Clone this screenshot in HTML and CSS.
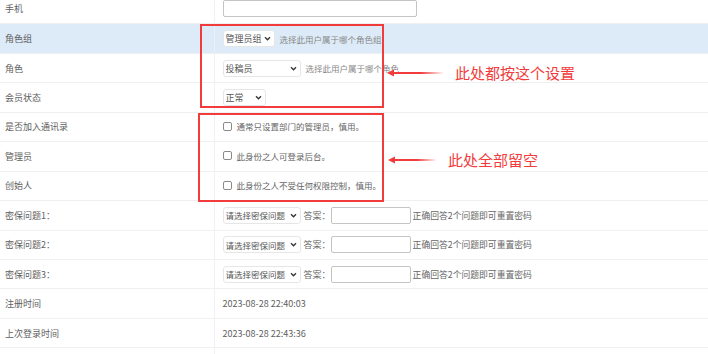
FILE: index.html
```html
<!DOCTYPE html>
<html lang="zh-CN">
<head>
    <meta charset="UTF-8">
    <meta name="viewport" content="width=device-width, initial-scale=1.0">
    <title>会员编辑</title>
    <link rel="stylesheet" href="styles.css">
</head>
<body>
    <div class="page">
        <table class="form-table">
            <tr>
                <td class="label">手机</td>
                <td class="field"><input type="text" class="text-input wide"></td>
            </tr>
            <tr class="hover">
                <td class="label">角色组</td>
                <td class="field">
                    <span class="select-wrap"><select class="select sel-group"><option>管理员组</option></select><svg class="chev" viewBox="0 0 8 6"><path d="M1 1.5 L4 4.5 L7 1.5"/></svg></span>
                    <span class="hint">选择此用户属于哪个角色组</span>
                </td>
            </tr>
            <tr>
                <td class="label">角色</td>
                <td class="field">
                    <span class="select-wrap"><select class="select sel-role"><option>投稿员</option></select><svg class="chev" viewBox="0 0 8 6"><path d="M1 1.5 L4 4.5 L7 1.5"/></svg></span>
                    <span class="hint">选择此用户属于哪个角色</span>
                </td>
            </tr>
            <tr>
                <td class="label">会员状态</td>
                <td class="field">
                    <span class="select-wrap"><select class="select sel-status"><option>正常</option></select><svg class="chev" viewBox="0 0 8 6"><path d="M1 1.5 L4 4.5 L7 1.5"/></svg></span>
                </td>
            </tr>
            <tr>
                <td class="label">是否加入通讯录</td>
                <td class="field"><label class="check"><span class="box"></span>通常只设置部门的管理员，慎用。</label></td>
            </tr>
            <tr>
                <td class="label">管理员</td>
                <td class="field"><label class="check"><span class="box"></span>此身份之人可登录后台。</label></td>
            </tr>
            <tr>
                <td class="label">创始人</td>
                <td class="field"><label class="check"><span class="box"></span>此身份之人不受任何权限控制，慎用。</label></td>
            </tr>
            <tr>
                <td class="label">密保问题1：</td>
                <td class="field">
                    <span class="select-wrap"><select class="select sel-question"><option>请选择密保问题</option></select><svg class="chev" viewBox="0 0 8 6"><path d="M1 1.5 L4 4.5 L7 1.5"/></svg></span>
                    <span class="answer">答案：</span><input type="text" class="text-input short">
                    <span class="note">正确回答2个问题即可重置密码</span>
                </td>
            </tr>
            <tr>
                <td class="label">密保问题2：</td>
                <td class="field">
                    <span class="select-wrap"><select class="select sel-question"><option>请选择密保问题</option></select><svg class="chev" viewBox="0 0 8 6"><path d="M1 1.5 L4 4.5 L7 1.5"/></svg></span>
                    <span class="answer">答案：</span><input type="text" class="text-input short">
                    <span class="note">正确回答2个问题即可重置密码</span>
                </td>
            </tr>
            <tr>
                <td class="label">密保问题3：</td>
                <td class="field">
                    <span class="select-wrap"><select class="select sel-question"><option>请选择密保问题</option></select><svg class="chev" viewBox="0 0 8 6"><path d="M1 1.5 L4 4.5 L7 1.5"/></svg></span>
                    <span class="answer">答案：</span><input type="text" class="text-input short">
                    <span class="note">正确回答2个问题即可重置密码</span>
                </td>
            </tr>
            <tr>
                <td class="label">注册时间</td>
                <td class="field">2023-08-28 22:40:03</td>
            </tr>
            <tr>
                <td class="label">上次登录时间</td>
                <td class="field">2023-08-28 22:43:36</td>
            </tr>
            <tr>
                <td class="label"></td>
                <td class="field"></td>
            </tr>
        </table>

        <!-- annotations drawn over the screenshot -->
        <div class="mark mark-set"></div>
        <div class="mark mark-empty"></div>
        <div class="note-tip tip-set">
            <svg class="arrow" viewBox="0 0 56 8">
                <defs>
                    <linearGradient id="fade1" gradientUnits="userSpaceOnUse" x1="0" x2="56" y1="0" y2="0">
                        <stop offset="0" stop-color="#f23c3c"/>
                        <stop offset="0.6" stop-color="#f23c3c"/>
                        <stop offset="1" stop-color="#f23c3c" stop-opacity="0.05"/>
                    </linearGradient>
                </defs>
                <path d="M4 4 H56" stroke="url(#fade1)" stroke-width="2"/>
                <path d="M0 4 L7 0.5 L7 7.5 Z" fill="#f23c3c"/>
            </svg>
            <span>此处都按这个设置</span>
        </div>
        <div class="note-tip tip-empty">
            <svg class="arrow" viewBox="0 0 48 8">
                <defs>
                    <linearGradient id="fade2" gradientUnits="userSpaceOnUse" x1="0" x2="48" y1="0" y2="0">
                        <stop offset="0" stop-color="#f23c3c"/>
                        <stop offset="0.6" stop-color="#f23c3c"/>
                        <stop offset="1" stop-color="#f23c3c" stop-opacity="0.05"/>
                    </linearGradient>
                </defs>
                <path d="M4 4 H48" stroke="url(#fade2)" stroke-width="2"/>
                <path d="M0 4 L7 0.5 L7 7.5 Z" fill="#f23c3c"/>
            </svg>
            <span>此处全部留空</span>
        </div>
    </div>
</body>
</html>
```

FILE: styles.css
```css
body {
    margin: 0;
    background-color: #fff;
    font-family: "Noto Sans CJK SC", "Noto Sans", sans-serif;
    font-size: 9px;
    color: #606060;
    overflow: hidden;
}
.page {
    position: relative;
    width: 708px;
    height: 354px;
    overflow: hidden;
}
.form-table {
    width: 100%;
    border-collapse: collapse;
    margin-top: -5.5px;
}
.form-table td {
    height: 29.45px;
    padding: 0;
    border-bottom: 1px solid #eef0f2;
    box-sizing: border-box;
    vertical-align: middle;
    white-space: nowrap;
}
.form-table .label {
    width: 214px;
    padding-left: 5px;
    border-right: 1px solid #eef0f2;
    box-sizing: border-box;
}
.form-table .field {
    padding-left: 8px;
}
.form-table tr.hover td {
    background-color: #dcebf7;
}
.text-input {
    height: 17px;
    border: 1px solid #c4c4c4;
    border-radius: 2px;
    box-sizing: border-box;
    padding: 0 3px;
    vertical-align: middle;
    background: #fff;
}
.text-input.wide {
    width: 194px;
}
.text-input.short {
    width: 80px;
}
.select-wrap {
    position: relative;
    display: inline-block;
    vertical-align: middle;
}
.select {
    appearance: none;
    -webkit-appearance: none;
    height: 17px;
    border: 1px solid #e6e6e6;
    border-radius: 3px;
    background: #fff;
    font-family: inherit;
    font-size: 9px;
    color: #555;
    padding: 0 0 0 2px;
    box-sizing: border-box;
    display: block;
}
.sel-group { width: 52px; }
.sel-role { width: 78px; }
.sel-status { width: 43px; }
.sel-question { width: 78px; font-size: 8.5px; }
.chev {
    position: absolute;
    right: 4px;
    top: 6px;
    width: 7px;
    height: 5px;
    fill: none;
    stroke: #333;
    stroke-width: 1.6;
}
.hint {
    margin-left: 3px;
    font-size: 8.5px;
    color: #888;
    vertical-align: middle;
}
.check {
    display: inline-flex;
    align-items: center;
    font-size: 8.5px;
    color: #666;
}
.check .box {
    width: 9px;
    height: 9px;
    border: 1px solid #8a8a8a;
    border-radius: 2px;
    box-sizing: border-box;
    margin-right: 5px;
    background: #fff;
}
.answer {
    margin-left: 1px;
    color: #666;
    vertical-align: middle;
}
.note {
    margin-left: 0;
    font-size: 8.8px;
    color: #666;
    vertical-align: middle;
}
.mark {
    position: absolute;
    border: 2px solid #f23c3c;
    box-sizing: border-box;
}
.mark-set {
    left: 200px;
    top: 24px;
    width: 184px;
    height: 84px;
}
.mark-empty {
    left: 198px;
    top: 113px;
    width: 186px;
    height: 89px;
}
.note-tip {
    position: absolute;
    display: flex;
    align-items: center;
    color: #f23c3c;
    font-size: 15px;
}
.tip-set {
    left: 387px;
    top: 62px;
}
.tip-set .arrow {
    width: 56px;
    height: 8px;
    margin-right: 12px;
}
.tip-empty {
    left: 388px;
    top: 149px;
}
.tip-empty .arrow {
    width: 48px;
    height: 8px;
    margin-right: 12px;
}
```
